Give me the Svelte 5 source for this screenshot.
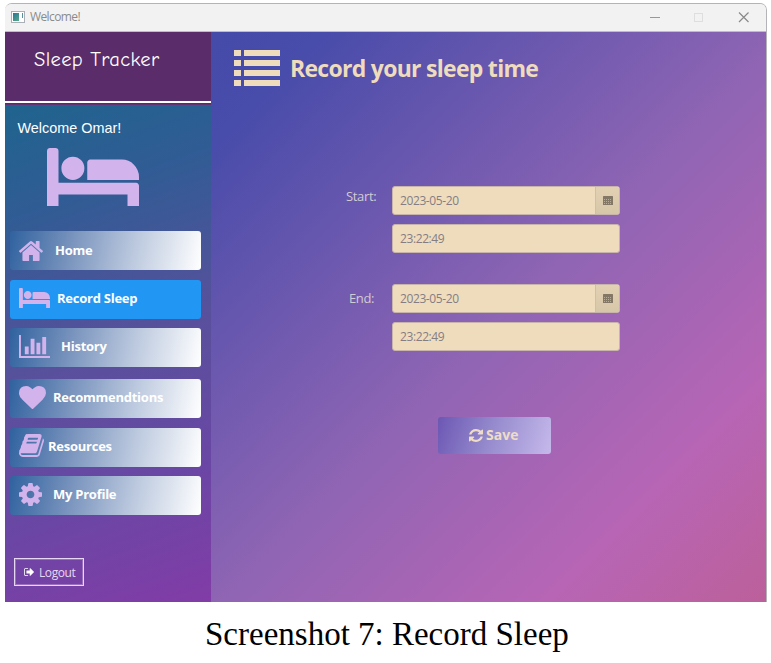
<script>
  const icons = {
    bed: { box: '0 256 2048 1280', d: 'M256 1024h1728q26 0 45 19t19 45v448h-256v-256h-1536v256h-256v-1216q0-26 19-45t45-19h128q26 0 45 19t19 45v704zm576-320q0-106-75-181t-181-75-181 75-75 181 75 181 181 75 181-75 75-181zm1216 256v-64q0-159-112.5-271.5t-271.5-112.5h-704q-26 0-45 19t-19 45v384h1152z' },
    home: { box: '89 253 1614 1283', d: 'M1472 992v480q0 26-19 45t-45 19h-384v-384h-256v384h-384q-26 0-45-19t-19-45v-480q0-1 .5-3t.5-3l575-474 575 474q1 2 1 6zm223-69l-62 74q-8 9-21 11h-3q-13 0-21-7l-692-577-692 577q-12 8-24 7-13-2-21-11l-62-74q-8-10-7-23.5t11-21.5l719-599q32-26 76-26t76 26l244 204v-195q0-14 9-23t23-9h192q14 0 23 9t9 23v408l219 182q10 8 11 21.5t-7 23.5z' },
    chart: { box: '0 128 2048 1536', d: 'M640 896v512h-256v-512h256zm384-512v1024h-256v-1024h256zm1024 1152v128h-2048v-1536h128v1408h1920zm-640-896v768h-256v-768h256zm384-384v1152h-256v-1152h256z' },
    heart: { box: '0 128 1792 1536', d: 'M896 1664q-26 0-44-18l-624-602q-10-8-27.5-26t-55.5-65.5-68-97.5-53.5-121-23.5-138q0-220 127-344t351-124q62 0 126.5 21.5t120 58 95.5 68.5 76 68q36-36 76-68t95.5-68.5 120-58 126.5-21.5q224 0 351 124t127 344q0 221-229 450l-623 600q-18 18-44 18z' },
    book: { box: '64 128 1664 1536', d: 'M1703 478q40 57 18 129l-275 906q-19 64-76.5 107.5t-122.5 43.5h-923q-77 0-148.5-53.5t-99.5-131.5q-24-67-2-127 0-4 3-27t4-37q1-8-3-21.5t-3-19.5q2-11 8-21t16.5-23.5 16.5-23.5q23-38 45-91.5t30-91.5q3-10 .5-30t-.5-28q3-11 17-28t17-23q21-36 42-92t25-90q1-9-2.5-32t.5-28q4-13 22-30.5t22-22.5q19-26 42.5-84.5t27.5-96.5q1-8-3-25.5t-2-26.5q2-8 9-18t18-23 17-21q8-12 16.5-30.5t15-35 16-36 19.5-32 26.5-23.5 36-11.5 47.5 5.5l-1 3q38-9 51-9h761q74 0 114 56t18 130l-274 906q-36 119-71.5 153.5t-128.5 34.5h-869q-27 0-38 15-11 16-1 43 24 70 144 70h923q29 0 56-15.5t35-41.5l300-987q7-22 5-57 38 15 59 43zm-1064 2q-4 13 2 22.5t20 9.5h608q13 0 25.5-9.5t16.5-22.5l21-64q4-13-2-22.5t-20-9.5h-608q-13 0-25.5 9.5t-16.5 22.5zm-83 256q-4 13 2 22.5t20 9.5h608q13 0 25.5-9.5t16.5-22.5l21-64q4-13-2-22.5t-20-9.5h-608q-13 0-25.5 9.5t-16.5 22.5z' },
    gear: { box: '128 128 1536 1536', d: 'M1152 896q0-106-75-181t-181-75-181 75-75 181 75 181 181 75 181-75 75-181zm512-109v222q0 12-8 23t-20 13l-185 28q-19 54-39 91 35 50 107 138 10 12 10 25t-9 23q-27 37-99 108t-94 71q-12 0-26-9l-138-108q-44 23-91 38-16 136-29 186-7 28-36 28h-222q-14 0-24.5-8.5t-11.5-21.5l-28-184q-49-16-90-37l-141 107q-10 9-25 9-14 0-25-11-126-114-165-168-7-10-7-23 0-12 8-23 15-21 51-66.5t54-70.5q-27-50-41-99l-183-27q-13-2-21-12.5t-8-23.5v-222q0-12 8-23t19-13l186-28q14-46 39-92-40-57-107-138-10-12-10-24 0-10 9-23 26-36 98.5-107.5t94.5-71.5q13 0 26 10l138 107q44-23 91-38 16-136 29-186 7-28 36-28h222q14 0 24.5 8.5t11.5 21.5l28 184q49 16 90 37l142-107q9-9 24-9 13 0 25 10 129 119 165 170 7 8 7 22 0 12-8 23-15 21-51 66.5t-54 70.5q26 50 41 98l183 28q13 2 21 12.5t8 23.5z' },
    refresh: { box: '128 128 1536 1536', d: 'M1639 1056q0 5-1 7-64 268-268 434.5t-478 166.5q-146 0-282.5-55t-243.5-157l-129 129q-19 19-45 19t-45-19-19-45v-448q0-26 19-45t45-19h448q26 0 45 19t19 45-19 45l-137 137q71 66 161 102t187 36q134 0 250-65t186-179q11-17 53-117 8-23 30-23h192q13 0 22.5 9.5t9.5 22.5zm25-800v448q0 26-19 45t-45 19h-448q-26 0-45-19t-19-45 19-45l138-138q-148-137-349-137-134 0-250 65t-186 179q-11 17-53 117-8 23-30 23h-199q-13 0-22.5-9.5t-9.5-22.5v-7q65-268 270-434.5t480-166.5q146 0 284 55.5t245 156.5l130-129q19-19 45-19t45 19 19 45z' },
    logout: { box: '64 256 1568 1280', d: 'M704 1440q0 4 1 20t.5 26.5-3 23.5-10 19.5-20.5 6.5h-320q-119 0-203.5-84.5t-84.5-203.5v-704q0-119 84.5-203.5t203.5-84.5h320q13 0 22.5 9.5t9.5 22.5q0 4 1 20t.5 26.5-3 23.5-10 19.5-20.5 6.5h-320q-66 0-113 47t-47 113v704q0 66 47 113t113 47h312l11.5 1 11.5 3 8 5.5 7 9 2 13.5zm928-544q0 26-19 45l-544 544q-19 19-45 19t-45-19-19-45v-288h-448q-26 0-45-19t-19-45v-384q0-26 19-45t45-19h448v-288q0-26 19-45t45-19 45 19l544 544q19 19 19 45z' },
    list: { box: '0 0 46 36', d: 'M0 0h7v6H0zM10 0h36v6H10zM0 10h7v6H0zM10 10h36v6H10zM0 20h7v6H0zM10 20h36v6H10zM0 30h7v6H0zM10 30h36v6H10z' }
  };

  const nav = [
    { key: 'home', icon: 'home', label: 'Home' },
    { key: 'record', icon: 'bed', label: 'Record Sleep' },
    { key: 'history', icon: 'chart', label: 'History' },
    { key: 'recommend', icon: 'heart', label: 'Recommendtions' },
    { key: 'resources', icon: 'book', label: 'Resources' },
    { key: 'profile', icon: 'gear', label: 'My Profile' }
  ];
  let active = $state('record');

  const entries = [
    { key: 'start', label: 'Start:', date: '2023-05-20', time: '23:22:49' },
    { key: 'end', label: 'End:', date: '2023-05-20', time: '23:22:49' }
  ];
</script>

{#snippet icon(name)}
  <svg class="icon" viewBox={icons[name].box} preserveAspectRatio="none" aria-hidden="true"><path d={icons[name].d} /></svg>
{/snippet}

<div class="page">
  <div class="window">
    <header class="titlebar">
      <span class="appicon"><i></i><b></b></span>
      <span class="wintitle">Welcome!</span>
      <svg class="controls" viewBox="0 0 100 12" aria-hidden="true">
        <path d="M0 6.5h10" stroke="#999" />
        <rect x="44.5" y="2.5" width="8" height="8" stroke="#dedede" />
        <path d="M89 1.5l9.500 9.500M98.500 1.500L89 11" stroke="#8a8a8a" stroke-width="1.2" />
      </svg>
    </header>
    <div class="body">
      <aside>
        <div class="brand"><span>Sleep Tracker</span></div>
        <div class="side">
          <p class="welcome">Welcome Omar!</p>
          <div class="hero">{@render icon('bed')}</div>
          <nav>
            {#each nav as item (item.key)}
              <button class="item {item.key}" class:active={active === item.key} onclick={() => (active = item.key)}>
                {@render icon(item.icon)}
                <span>{item.label}</span>
              </button>
            {/each}
          </nav>
          <button class="logout">{@render icon('logout')}<span>Logout</span></button>
        </div>
      </aside>
      <main>
        <h1>{@render icon('list')}<span>Record your sleep time</span></h1>
        <form>
          {#each entries as e (e.key)}
            <div class="entry {e.key}">
              <span class="label">{e.label}</span>
              <div class="fields">
                <div class="field">
                  <span>{e.date}</span>
                  <div class="picker">
                    <svg viewBox="0 0 10 9" aria-hidden="true">
                      <path d="M.5 0h9q.5 0 .5.5V9H0V.5Q0 0 .5 0z" fill="#837765" />
                      <path d="M1 3h1v1H1zM3 3h1v1H3zM5 3h1v1H5zM7 3h1v1H7zM1 5h1v1H1zM3 5h1v1H3zM5 5h1v1H5zM7 5h1v1H7zM1 7h1v1H1zM3 7h1v1H3zM5 7h1v1H5zM7 7h1v1H7z" fill="#b8ab92" />
                    </svg>
                  </div>
                </div>
                <div class="field"><span>{e.time}</span></div>
              </div>
            </div>
          {/each}
          <button type="button" class="save">{@render icon('refresh')}<span>Save</span></button>
        </form>
      </main>
    </div>
  </div>
  <p class="caption">Screenshot 7: Record Sleep</p>
</div>

<style>
  :global(body) { background: #fff; }
  .page {
    width: 771px;
    height: 663px;
    box-sizing: border-box;
    padding: 3px 4px 0 5px;
    overflow: hidden;
    font-family: "Open Sans", "Noto Sans", sans-serif;
  }
  .page * { box-sizing: border-box; }
  p, h1 { margin: 0; }
  button { border: 0; padding: 0; background: none; font-family: inherit; cursor: pointer; }
  span { white-space: nowrap; }
  .icon { display: block; flex: none; fill: currentColor; }
  .window { height: 599px; border-radius: 7px 7px 0 0; overflow: hidden; border-right: 1px solid #b4b4b8; border-top: 1px solid #b4b4b4; }
  .titlebar {
    height: 28px;
    display: flex;
    align-items: center;
    background: #f2f2f2;
    border-bottom: 1px solid #bdbccb;
    padding: 0 16px 0 6px;
  }
  .appicon { width: 14px; height: 12px; margin-top: -2px; border: 1px solid #aab0b5; background: #fff; display: flex; justify-content: space-between; padding: 1px; }
  .appicon i { width: 6px; height: 8px; background: linear-gradient(135deg, #2b7595, #55a98a); }
  .appicon b { width: 1px; height: 5px; background: #57919d; }
  .wintitle { margin: -2px 0 0 5px; font-size: 12px; letter-spacing: -.6px; color: #8b8b8b; }
  .controls { width: 100px; height: 12px; margin: -2px 0 0 auto; fill: none; }
  .body { display: flex; height: 570px; }
  aside { width: 206px; display: flex; flex-direction: column; color: #fff; }
  .brand { height: 73px; background: #5a2c69; border-bottom: 1px solid #623374; padding: 13px 0 0 29px; font: 20.5px/30px "Comic Sans MS", "Comic Neue", cursive; letter-spacing: .35px; display: flex; flex-direction: column; }
  .brand::after { content: ""; height: 2px; margin: auto 0 1px -29px; background: #fff; }
  .side { height: 497px; padding: 13px 10px 0 5px; background: linear-gradient(160deg, #1f648e 0%, #305c94 20%, #59509c 50%, #6947a4 74%, #823ca7 100%); }
  .welcome { font: 14.4px/20px "Liberation Sans", Arial, sans-serif; padding-left: 7.500px; }
  .hero { padding: 10px 0 0 37px; color: #d2b3ec; }
  .hero .icon { width: 92px; height: 58px; }
  nav { padding-top: 25px; }
  .item {
    display: flex;
    align-items: center;
    width: 191px;
    height: 39px;
    margin-bottom: 10px;
    padding-left: 9px;
    border-radius: 3px;
    color: #fff;
    font-size: 13px;
    letter-spacing: -.25px;
    font-weight: 700;
    background: linear-gradient(102deg, #30629f 0%, #7490bb 30%, #b7c5dc 62%, #fff 100%);
  }
  .item.active { background: #2196f3; }
  .item .icon { color: #d2b3ec; }
  .item span { margin-top: -1px; }
  .home .icon { width: 24px; height: 20px; }
  .home span { margin-left: 12px; }
  .record .icon { width: 31px; height: 20px; margin-top: -3px; }
  .record span { margin-left: 7px; margin-top: -3px; }
  .history .icon { width: 31px; height: 23px; margin-top: -3px; }
  .history span { margin-left: 11px; margin-top: -3px; }
  .recommend .icon { width: 27px; height: 23px; margin-top: -2px; }
  .recommend span { margin-left: 7px; margin-top: -3px; }
  .resources .icon { width: 25px; height: 23px; margin-top: -4px; }
  .resources span { margin-left: 4px; margin-top: -3px; }
  .profile .icon { width: 23px; height: 23px; margin-top: -3px; }
  .profile span { margin-left: 11px; margin-top: -3px; }
  .record { margin-bottom: 9px; }
  .history { margin-bottom: 12px; }
  .recommend { margin-bottom: 10px; }
  .resources { margin-bottom: 9px; }
  .logout {
    display: flex;
    align-items: center;
    width: 70px;
    height: 28px;
    margin: 43px 0 0 4px;
    border: 1px solid #e6d8f0;
    box-shadow: inset 0 0 0 1px #9b70c0;
    padding-left: 9px;
    color: #fff;
    font-size: 12px;
  }
  .logout .icon { width: 10px; height: 8px; }
  .logout span { margin-left: 5px; color: #e7d8f0; letter-spacing: -.4px; }
  main { flex: 1; background: linear-gradient(135deg, #454ba9 0%, #484caa 10%, #9065b4 52%, #b765b5 80%, #bc609a 100%); }
  h1 { display: flex; align-items: flex-start; padding: 18px 0 0 23px; height: 55px; color: #eedcbd; font-size: 23px; letter-spacing: -.72px; line-height: 36px; }
  h1 .icon { width: 46px; height: 36px; }
  h1 span { margin-left: 10px; }
  form { padding-top: 99px; }
  .entry { display: flex; }
  .label { width: 181px; padding-left: 135px; font-size: 13px; letter-spacing: -.35px; line-height: 20px; color: #d3cbd2; }
  .end .label { padding-left: 138px; padding-top: 4px; }
  .end { margin-top: 31px; }
  .fields { display: flex; flex-direction: column; gap: 9px; }
  .field {
    width: 228px;
    height: 29px;
    display: flex;
    align-items: center;
    justify-content: space-between;
    border: 1px solid #c9b4ab;
    border-radius: 3px;
    background: #eedcbd;
    padding-left: 7px;
    font-size: 12px;
    letter-spacing: -.4px;
    color: #857d84;
  }
  .picker { width: 24px; height: 27px; display: grid; place-items: center; border-left: 1px solid #cebfa6; background: linear-gradient(#e2d1b2, #d7c7a9); }
  .picker svg { width: 10px; height: 9px; }
  .save {
    display: flex;
    align-items: center;
    width: 113px;
    height: 37px;
    margin: 66px 0 0 227px;
    padding-left: 31px;
    border-radius: 3px;
    background: linear-gradient(108deg, #6c57b4, #9489cc 45%, #c5b9eb);
    color: #eedcc6;
    font-size: 14px;
    font-weight: 700;
  }
  .save .icon { width: 14px; height: 13px; margin-top: -1px; }
  .save span { margin: -2px 0 0 3px; }
  .caption { font: 33px/37px "Liberation Serif", "Times New Roman", serif; color: #000; padding: 14px 0 0 200px; white-space: nowrap; }
</style>
